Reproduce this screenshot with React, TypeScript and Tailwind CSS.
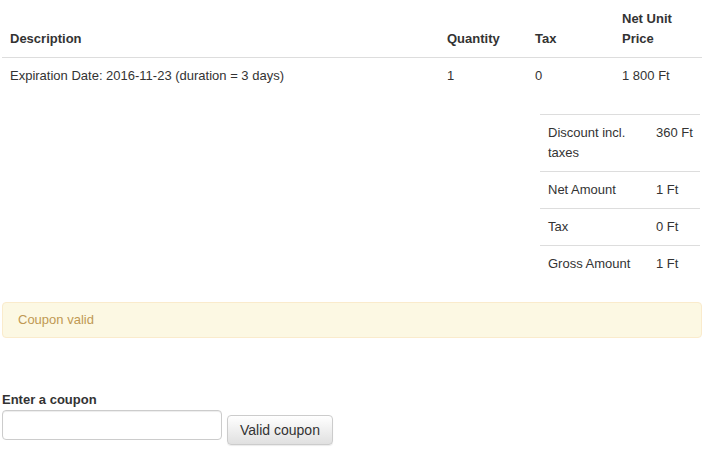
import { useState } from 'react';

const lines = [
  { description: 'Expiration Date: 2016-11-23 (duration = 3 days)', quantity: '1', tax: '0', price: '1 800 Ft' },
];

const totals = [
  { label: 'Discount incl. taxes', value: '360 Ft' },
  { label: 'Net Amount', value: '1 Ft' },
  { label: 'Tax', value: '0 Ft' },
  { label: 'Gross Amount', value: '1 Ft' },
];

export default function App() {
  const [coupon, setCoupon] = useState('');

  return (
    <div className="min-h-[456px] bg-white px-[2px] pt-px text-[13px] leading-5 text-[#333] [font-family:'Liberation_Sans',Arial,sans-serif]">
      <table className="w-[700px] table-fixed border-collapse">
        <colgroup>
          <col className="w-[437px]" />
          <col className="w-[88px]" />
          <col className="w-[87px]" />
          <col className="w-[88px]" />
        </colgroup>
        <thead>
          <tr className="border-b border-[#ddd]">
            <th className="p-2 text-left align-bottom font-bold">Description</th>
            <th className="p-2 text-left align-bottom font-bold">Quantity</th>
            <th className="p-2 text-left align-bottom font-bold">Tax</th>
            <th className="p-2 text-left align-bottom font-bold">Net Unit Price</th>
          </tr>
        </thead>
        <tbody>
          {lines.map((line) => (
            <tr key={line.description}>
              <td className="p-2 align-top">{line.description}</td>
              <td className="p-2 align-top">{line.quantity}</td>
              <td className="p-2 align-top">{line.tax}</td>
              <td className="p-2 align-top">{line.price}</td>
            </tr>
          ))}
        </tbody>
      </table>

      <div className="mt-5 flex w-[700px] justify-end pr-[2px]">
        <table className="w-[160px] table-fixed border-collapse">
          <colgroup>
            <col className="w-[108px]" />
            <col className="w-[52px]" />
          </colgroup>
          <tbody>
            {totals.map((row) => (
              <tr key={row.label} className="border-t border-[#ddd]">
                <td className="p-2 align-top">{row.label}</td>
                <td className="whitespace-nowrap p-2 align-top">{row.value}</td>
              </tr>
            ))}
          </tbody>
        </table>
      </div>

      <div className="mt-5 w-[700px] rounded border border-[#faebcc] bg-[#fcf8e3] px-[15px] py-[7px] text-[#c09853]">
        Coupon valid
      </div>

      <form className="mt-[52px]" onSubmit={(e) => e.preventDefault()}>
        <label htmlFor="coupon" className="block font-bold">Enter a coupon</label>
        <div className="flex items-end gap-[5px]">
          <input
            id="coupon"
            type="text"
            value={coupon}
            onChange={(e) => setCoupon(e.target.value)}
            className="h-[30px] w-[220px] rounded border border-[#ccc] bg-white px-3 shadow-[inset_0_1px_1px_rgba(0,0,0,0.075)] outline-none"
          />
          <button
            type="submit"
            className="mb-[-5px] h-[30px] rounded border border-[#ccc] bg-gradient-to-b from-white to-[#e0e0e0] px-3 text-[14px] text-[#333] shadow-[0_1px_1px_rgba(0,0,0,0.08)]"
          >
            Valid coupon
          </button>
        </div>
      </form>
    </div>
  );
}
